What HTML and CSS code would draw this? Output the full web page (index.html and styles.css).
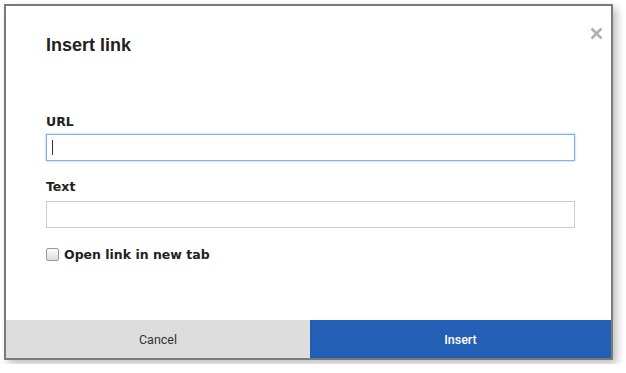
FILE: index.html
```html
<!DOCTYPE html>
<html>
<head>
<meta charset="utf-8">
<link rel="stylesheet" href="styles.css">
</head>
<body>
<div class="dialog">
  <div class="body">
    <div class="head">
      <h1 class="title">Insert link</h1>
      <svg class="close" width="13" height="13" viewBox="0 0 13 13"><path d="M1.5 1.5 L11.5 11.5 M11.5 1.5 L1.5 11.5" stroke="#b0b0b0" stroke-width="2.6" stroke-linecap="butt"/></svg>
    </div>
    <label class="label" for="url">URL</label>
    <div class="input focus"><span class="caret"></span></div>
    <label class="label">Text</label>
    <div class="input"></div>
    <div class="check">
      <span class="box"></span>
      <span class="check-text">Open link in new tab</span>
    </div>
  </div>
  <div class="footer">
    <div class="btn cancel">Cancel</div>
    <div class="btn insert">Insert</div>
  </div>
</div>
</body>
</html>
```
FILE: styles.css
```css
html, body { margin: 0; padding: 0; background: #fff; }
body { padding: 4px; }
.dialog {
  width: 605px;
  height: 352px;
  border: 2px solid #7a7a7a;
  background: #fff;
  box-shadow: 4px 4px 8px rgba(0,0,0,0.25);
  display: flex;
  flex-direction: column;
}
.body { flex: 1; padding: 0 36px 0 40px; display: flex; flex-direction: column; }
.head { display: flex; justify-content: space-between; align-items: flex-start; height: 86px; }
.title {
  margin: 29px 0 0 0;
  font-family: "Liberation Sans", Arial, sans-serif;
  font-weight: bold;
  font-size: 18px;
  color: #222;
}
.close { margin: 21px -28px 0 0; }
.label {
  font-family: "DejaVu Sans", Verdana, sans-serif;
  font-weight: bold;
  font-size: 12.5px;
  color: #222;
  height: 20px;
  margin-top: 22px;
}
.input + .label { margin-top: 18px; }
.input {
  height: 25px;
  border: 1px solid #ccc;
  background: #fff;
  display: flex;
  align-items: center;
  margin-top: 0;
}
.input.focus { border-color: #7ab4e8; box-shadow: 0 0 2px rgba(90,160,230,0.7); }
.label + .input:not(.focus) { margin-top: 2px; }
.caret { width: 1px; height: 15px; background: #333; margin-left: 5px; }
.check { display: flex; align-items: center; margin-top: 19px; gap: 5px; }
.box {
  width: 11px; height: 11px;
  border: 1px solid #9a9a9a;
  border-radius: 2px;
  background: linear-gradient(#fbfbfb, #dedede);
}
.check-text {
  font-family: "DejaVu Sans", Verdana, sans-serif;
  font-weight: bold;
  font-size: 12.5px;
  color: #222;
}
.footer { display: flex; height: 38px; }
.btn {
  display: flex; align-items: center; justify-content: center;
  font-family: Roboto, "Liberation Sans", sans-serif;
  font-size: 12.5px;
}
.cancel { width: 304px; background: #dddddd; color: #333; }
.insert { flex: 1; background: #2360b5; color: #fff; font-weight: 500; }
```
